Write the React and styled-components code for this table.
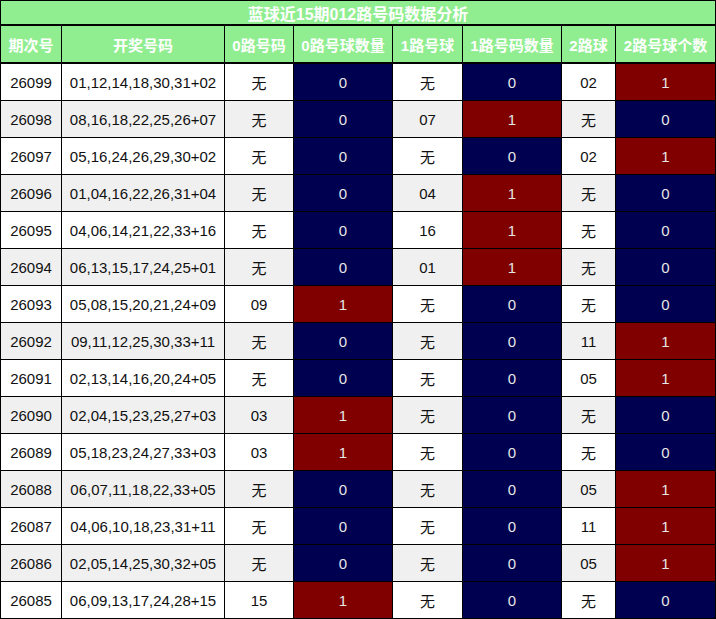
import React from 'react';
import styled, { createGlobalStyle } from 'styled-components';

const GlobalStyle = createGlobalStyle`
  html, body {
    margin: 0;
    padding: 0;
    background: #fff;
  }
  body {
    font-family: "Liberation Sans", Arial, "Noto Sans CJK SC", sans-serif;
  }
`;

const COLS = '60px 162px 68px 98px 69px 98px 53px 99px';

const Table = styled.div`
  width: 716px;
  box-sizing: border-box;
  border: 1px solid #000;
  background: #000;
`;

const Title = styled.div`
  height: 23px;
  display: flex;
  align-items: center;
  justify-content: center;
  background: #90ee90;
  color: #fff;
  font-weight: bold;
  font-size: 16px;
  border-bottom: 2px solid #000;
`;

const Grid = styled.div`
  display: grid;
  grid-template-columns: ${COLS};
  grid-auto-rows: 36px;
  gap: 1px;
  ${p => p.$head && 'border-bottom: 2px solid #000;'}
`;

const Head = styled.div`
  display: flex;
  align-items: center;
  justify-content: center;
  background: #90ee90;
  color: #fff;
  font-weight: bold;
  font-size: 15px;
  white-space: nowrap;
`;

const tones = {
  navy: '#000050',
  red: '#800000',
};

const Cell = styled.div`
  display: flex;
  align-items: center;
  justify-content: center;
  font-size: 15px;
  white-space: nowrap;
  background: ${p => tones[p.$tone] || (p.$odd ? '#f0f0f0' : '#fff')};
  color: ${p => (tones[p.$tone] ? '#e6e6e6' : '#111')};
`;

const headers = ['期次号', '开奖号码', '0路号码', '0路号球数量', '1路号球', '1路号码数量', '2路球', '2路号球个数'];

const rows = [
  ['26099', '01,12,14,18,30,31+02', '无', 0, '无', 0, '02', 1],
  ['26098', '08,16,18,22,25,26+07', '无', 0, '07', 1, '无', 0],
  ['26097', '05,16,24,26,29,30+02', '无', 0, '无', 0, '02', 1],
  ['26096', '01,04,16,22,26,31+04', '无', 0, '04', 1, '无', 0],
  ['26095', '04,06,14,21,22,33+16', '无', 0, '16', 1, '无', 0],
  ['26094', '06,13,15,17,24,25+01', '无', 0, '01', 1, '无', 0],
  ['26093', '05,08,15,20,21,24+09', '09', 1, '无', 0, '无', 0],
  ['26092', '09,11,12,25,30,33+11', '无', 0, '无', 0, '11', 1],
  ['26091', '02,13,14,16,20,24+05', '无', 0, '无', 0, '05', 1],
  ['26090', '02,04,15,23,25,27+03', '03', 1, '无', 0, '无', 0],
  ['26089', '05,18,23,24,27,33+03', '03', 1, '无', 0, '无', 0],
  ['26088', '06,07,11,18,22,33+05', '无', 0, '无', 0, '05', 1],
  ['26087', '04,06,10,18,23,31+11', '无', 0, '无', 0, '11', 1],
  ['26086', '02,05,14,25,30,32+05', '无', 0, '无', 0, '05', 1],
  ['26085', '06,09,13,17,24,28+15', '15', 1, '无', 0, '无', 0],
];

const countTone = n => (n > 0 ? 'red' : 'navy');

function App() {
  return (
    <>
      <GlobalStyle />
      <Table>
        <Title>蓝球近15期012路号码数据分析</Title>
        <Grid $head>
          {headers.map(h => <Head key={h}>{h}</Head>)}
        </Grid>
        <Grid>
          {rows.map((r, i) => {
            const odd = i % 2 === 1;
            return r.map((v, j) => (
              <Cell
                key={`${r[0]}-${j}`}
                $odd={odd}
                $tone={j === 3 || j === 5 || j === 7 ? countTone(v) : null}
              >
                {v}
              </Cell>
            ));
          })}
        </Grid>
      </Table>
    </>
  );
}

export default App;
